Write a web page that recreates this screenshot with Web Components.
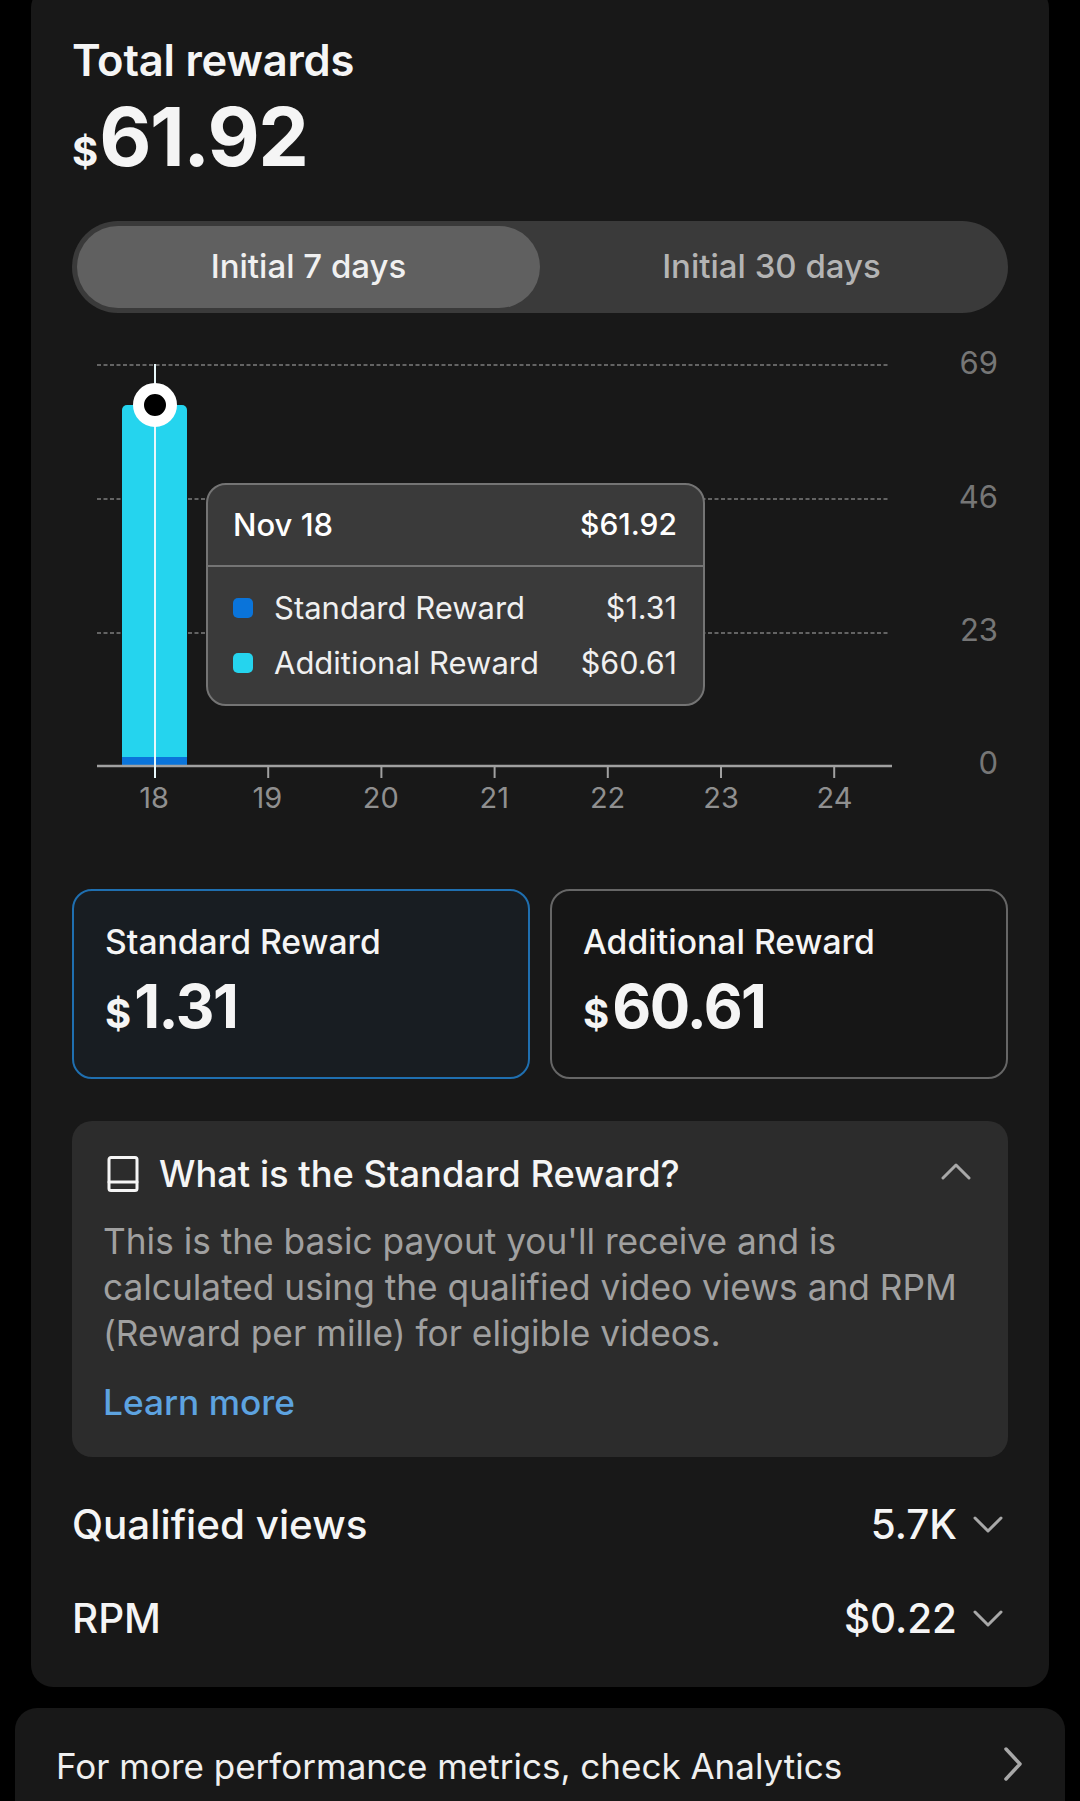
<!DOCTYPE html>
<html>
<head>
<meta charset="utf-8">
<style>
	html, body {
		margin: 0;
		height: 1801px;
		overflow: hidden;
		background: #000;
		font-family: Inter, 'Noto Sans', sans-serif;
		color: #f5f5f5;
	}
</style>
</head>
<body>
<rw-page>
	<rw-panel>
		<rw-total label="Total rewards" amount="61.92"></rw-total>
		<rw-toggle first="Initial 7 days" second="Initial 30 days"></rw-toggle>
		<rw-chart>
			<rw-tooltip date="Nov 18" total="$61.92"></rw-tooltip>
		</rw-chart>
		<rw-stats>
			<rw-stat label="Standard Reward" amount="1.31" selected></rw-stat>
			<rw-stat label="Additional Reward" amount="60.61"></rw-stat>
		</rw-stats>
		<rw-info title-text="What is the Standard Reward?" link="Learn more">This is the basic payout you'll receive and is calculated using the qualified video views and RPM (Reward per mille) for eligible videos.</rw-info>
		<rw-metrics>
			<rw-metric label="Qualified views" value="5.7K"></rw-metric>
			<rw-metric label="RPM" value="$0.22"></rw-metric>
		</rw-metrics>
	</rw-panel>
	<rw-link>For more performance metrics, check Analytics</rw-link>
</rw-page>

<script>
const define = (name, css, html) => {
	customElements.define(name, class extends HTMLElement {
		constructor() {
			super();
			const shadowRoot = this.attachShadow({mode: 'open'});
			const attr = key => this.getAttribute(key) || '';
			shadowRoot.innerHTML = `<style>${css}</style>${html(attr)}`;
		}
	});
};

const chevron = points => `<svg width="30" height="30" viewBox="0 0 30 30" fill="none" stroke="#a8a8a8" stroke-width="3" stroke-linecap="round" stroke-linejoin="round"><polyline points="${points}"/></svg>`;

define('rw-page', ':host { display: block; margin-top: -14px; }', () => '<slot></slot>');

define('rw-panel', `
	:host {
		display: block;
		margin: 0 31px;
		padding: 51px 41px 21px;
		background: #181818;
		border-radius: 22px;
	}
`, () => '<slot></slot>');

define('rw-total', `
	:host { display: block; }
	.label { font-size: 43.5px; line-height: 46px; font-weight: 600; letter-spacing: -0.2px; }
	.amount { display: flex; align-items: baseline; margin-top: 9px; height: 89px; line-height: 90px; font-weight: 700; }
	.cur { font-size: 40px; margin-right: 1px; }
	.num { font-size: 80.5px; letter-spacing: -1.5px; }
`, attr => `
	<div class="label">${attr('label')}</div>
	<div class="amount"><span class="cur">$</span><span class="num">${attr('amount')}</span></div>
`);

define('rw-toggle', `
	:host {
		display: grid;
		grid-template-columns: 463px 1fr;
		height: 92px;
		margin-top: 40px;
		padding: 5px;
		box-sizing: border-box;
		background: #3a3a3a;
		border-radius: 46px;
		font-size: 33px;
		font-weight: 500;
	}
	div { display: flex; align-items: center; justify-content: center; padding-bottom: 2px; border-radius: 41px; }
	.on { background: #606060; color: #f0f0f0; }
	.off { color: #b4b4b4; }
`, attr => `<div class="on">${attr('first')}</div><div class="off">${attr('second')}</div>`);

const xLabels = [18, 19, 20, 21, 22, 23, 24];
const yLabels = [[69, 50], [46, 184], [23, 317], [0, 450]];

define('rw-chart', `
	:host {
		display: block;
		position: relative;
		height: 576px;
		margin: 0 -72px;
		font-size: 29px;
		color: #8f8f8f;
	}
	svg { position: absolute; left: 0; top: 0; }
	.x, .y { position: absolute; line-height: 36px; }
	.x { transform: translate(-50%, -50%); }
	.y { transform: translate(-100%, -50%); font-size: 31px; color: #767676; }
`, () => `
	<svg width="1080" height="576" viewBox="0 313 1080 576" fill="none">
		<g stroke="#7c7c7c" stroke-width="1.5" stroke-dasharray="4 2.5">
			<line x1="97" x2="889" y1="365" y2="365"/>
			<line x1="97" x2="889" y1="499" y2="499"/>
			<line x1="97" x2="889" y1="633" y2="633"/>
		</g>
		<path d="M122 410a5 5 0 0 1 5-5h55a5 5 0 0 1 5 5v347h-65z" fill="#25d4ee"/>
		<rect x="122" y="757" width="65" height="9" fill="#0a74da"/>
		<line x1="97" x2="892" y1="766" y2="766" stroke="#a0a0a0" stroke-width="2.5"/>
		<g stroke="#a0a0a0" stroke-width="2">
			${xLabels.map((_, i) => `<line x1="${155 + i * 113.2}" x2="${155 + i * 113.2}" y1="766" y2="778"/>`).join('')}
		</g>
		<line x1="155" x2="155" y1="364" y2="778" stroke="#e8f8fb" stroke-width="2"/>
		<circle cx="155" cy="405" r="16.5" fill="#000" stroke="#fff" stroke-width="11"/>
	</svg>
	${xLabels.map((v, i) => `<span class="x" style="left:${154 + i * 113.4}px;top:485px">${v}</span>`).join('')}
	${yLabels.map(([v, top]) => `<span class="y" style="left:998px;top:${top}px">${v}</span>`).join('')}
	<slot></slot>
`);

define('rw-tooltip', `
	:host {
		display: block;
		position: absolute;
		left: 206px;
		top: 170px;
		width: 499px;
		height: 223px;
		box-sizing: border-box;
		background: #3a3a3a;
		border: 2px solid #747474;
		border-radius: 20px;
		color: #f0f0f0;
		font-size: 31px;
	}
	.head {
		display: flex;
		justify-content: space-between;
		align-items: center;
		height: 78px;
		padding: 0 26px 2px 25px;
		border-bottom: 2px solid #747474;
		font-weight: 500;
		color: #fff;
	}
	.total { font-size: 30px; }
	.rows { padding: 13px 26px 0 25px; }
	.row { display: flex; align-items: center; height: 55px; }
	.dot { width: 20px; height: 20px; border-radius: 5px; margin-right: 21px; }
	.val { margin-left: auto; font-size: 30.5px; }
`, attr => `
	<div class="head"><span>${attr('date')}</span><span class="total">${attr('total')}</span></div>
	<div class="rows">
		<div class="row"><span class="dot" style="background:#0a74da"></span><span>Standard Reward</span><span class="val">$1.31</span></div>
		<div class="row"><span class="dot" style="background:#25d4ee"></span><span>Additional Reward</span><span class="val">$60.61</span></div>
	</div>
`);

define('rw-stats', `
	:host { display: grid; grid-template-columns: 458px 458px; justify-content: space-between; }
`, () => '<slot></slot>');

define('rw-stat', `
	:host {
		display: block;
		height: 190px;
		box-sizing: border-box;
		padding: 31px 31px 0;
		border: 2px solid #666;
		border-radius: 20px;
		background: #161616;
	}
	:host([selected]) { border-color: #1f6fb0; background: #181d22; }
	.label { font-size: 33.7px; line-height: 40px; font-weight: 500; }
	.amount { display: flex; align-items: baseline; margin-top: 8px; line-height: 72px; font-weight: 700; }
	.cur { font-size: 40px; margin-right: 3px; }
	.num { font-size: 60px; letter-spacing: -1.5px; }
`, attr => `
	<div class="label">${attr('label')}</div>
	<div class="amount"><span class="cur">$</span><span class="num">${attr('amount')}</span></div>
`);

define('rw-info', `
	:host {
		display: block;
		height: 336px;
		box-sizing: border-box;
		margin-top: 42px;
		padding: 30px 31px 0;
		background: #2c2c2c;
		border-radius: 20px;
	}
	.head { display: flex; align-items: center; height: 46px; font-size: 36.3px; font-weight: 500; color: #f5f5f5; }
	.book { margin: 0 19px 0 3px; }
	.up { margin-left: auto; margin-right: 6px; margin-top: -4px; line-height: 0; }
	.body { margin-top: 22px; font-size: 35.25px; line-height: 46px; color: #a0a0a0; }
	.more { margin-top: 23px; font-size: 35.25px; line-height: 46px; font-weight: 500; color: #5da3e0; }
`, attr => `
	<div class="head">
		<svg class="book" width="34" height="38" viewBox="0 0 34 38" fill="none" stroke="#f5f5f5" stroke-width="3" stroke-linejoin="round" stroke-linecap="round">
			<path d="M5 2.5h24a2 2 0 0 1 2 2v29a2 2 0 0 1-2 2H5a2 2 0 0 1-2-2v-29a2 2 0 0 1 2-2z"/>
			<path d="M3 27h28"/>
		</svg>
		<span>${attr('title-text')}</span>
		<span class="up">${chevron('2,21 15,8 28,21')}</span>
	</div>
	<div class="body"><slot></slot></div>
	<div class="more">${attr('link')}</div>
`);

define('rw-metrics', ':host { display: block; margin-top: 20px; padding-bottom: 1px; }', () => '<slot></slot>');

define('rw-metric', `
	:host {
		display: flex;
		align-items: center;
		height: 94px;
		font-size: 40.4px;
		font-weight: 500;
	}
	.value { margin-left: auto; margin-right: 16px; }
	svg { margin-right: 5px; }
`, attr => `
	<span>${attr('label')}</span>
	<span class="value">${attr('value')}</span>
	${chevron('2,9 15,22 28,9')}
`);

define('rw-link', `
	:host {
		display: flex;
		align-items: flex-start;
		height: 93px;
		box-sizing: border-box;
		margin: 21px 15px 0;
		padding: 36px 42px 0 41px;
		background: #181818;
		border-radius: 22px 22px 0 0;
		font-size: 35px;
		line-height: 44px;
		color: #efefef;
	}
	svg { margin-left: auto; margin-top: 2px; }
`, () => `
	<span><slot></slot></span>
	<svg width="20" height="36" viewBox="0 0 20 36" fill="none" stroke="#a8a8a8" stroke-width="3.5" stroke-linecap="round" stroke-linejoin="round"><polyline points="3,3 17,18 3,33"/></svg>
`);
</script>
</body>
</html>
